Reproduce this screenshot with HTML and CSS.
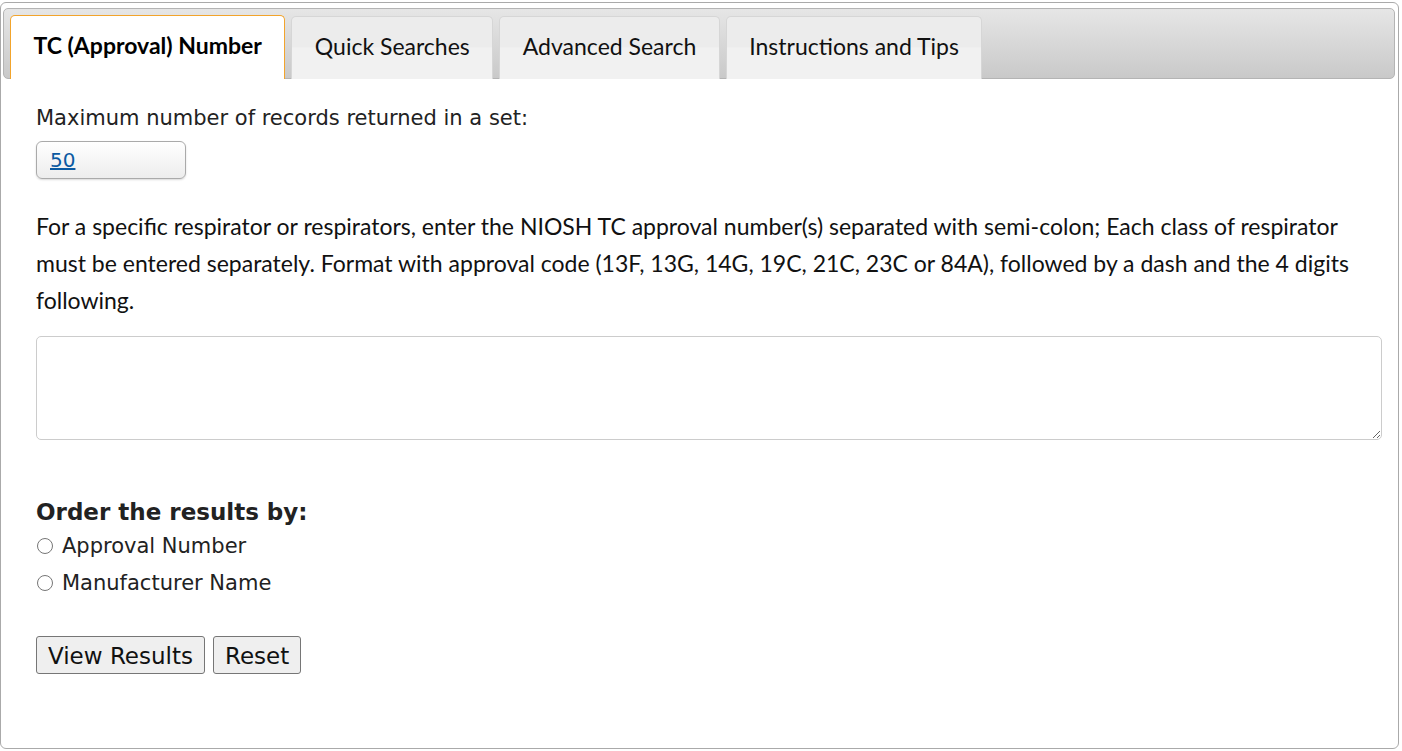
FILE: index.html
```html
<!DOCTYPE html>
<html lang="en">
<head>
<meta charset="utf-8">
<title>TC Approval Number Search</title>
<link rel="stylesheet" href="styles.css">
</head>
<body>
<div class="widget">
  <ul class="tabs">
    <li class="tab active">TC (Approval) Number</li>
    <li class="tab">Quick Searches</li>
    <li class="tab">Advanced Search</li>
    <li class="tab">Instructions and Tips</li>
  </ul>
  <div class="panel">
    <div class="max-label">Maximum number of records returned in a set:</div>
    <div class="select"><a class="select-text" href="#">50</a></div>
    <p class="desc">For a specific respirator or respirators, enter the NIOSH TC approval number(s) separated with semi-colon; Each class of respirator must be entered separately. Format with approval code (13F, 13G, 14G, 19C, 21C, 23C or 84A), followed by a dash and the 4 digits following.</p>
    <textarea class="tc-input"></textarea>
    <div class="order-title">Order the results by:</div>
    <label class="radio-row"><input type="radio" name="order" class="radio"> Approval Number</label>
    <label class="radio-row"><input type="radio" name="order" class="radio"> Manufacturer Name</label>
    <div class="buttons">
      <button class="btn">View Results</button>
      <button class="btn">Reset</button>
    </div>
  </div>
</div>
</body>
</html>
```

FILE: styles.css
```css
html, body {
  margin: 0;
  padding: 0;
  background: #fff;
}

.widget {
  box-sizing: border-box;
  width: 1399px;
  height: 747px;
  margin-top: 2px;
  border: 1px solid #aaaaaa;
  border-radius: 6px;
  padding: 5px 3px 0 2px;
}

.tabs {
  list-style: none;
  margin: 0;
  box-sizing: border-box;
  height: 71px;
  padding: 6px 6px 0 6px;
  border: 1px solid #b4b4b4;
  border-radius: 5px;
  background: linear-gradient(to bottom, #e6e6e6 0%, #c9c9c9 100%);
  display: flex;
  align-items: flex-end;
  gap: 6px;
}

.tab {
  box-sizing: border-box;
  height: 63px;
  margin-bottom: -1px;
  padding: 0 22.5px;
  border: 1px solid #d6d6d6;
  border-bottom: none;
  border-radius: 5px 5px 0 0;
  background: linear-gradient(to bottom, #ececec 0%, #ececec 48%, #f1f1f1 50%, #f1f1f1 100%);
  font-family: Lato, "Liberation Sans", sans-serif;
  font-size: 23px;
  line-height: 58px;
  color: #111;
  white-space: nowrap;
}

.tab.active {
  height: 64px;
  margin-bottom: -1px;
  background: #ffffff;
  border: 1px solid #f2a42c;
  border-bottom: none;
  font-weight: bold;
  color: #000;
}

.panel {
  padding: 0 33px;
}

.max-label {
  margin-top: 27px;
  font-family: "DejaVu Sans", Verdana, sans-serif;
  font-size: 21px;
  line-height: 24px;
  color: #222;
}

.select {
  box-sizing: border-box;
  width: 150px;
  height: 38px;
  margin-top: 11px;
  border: 1px solid #aaaaaa;
  border-radius: 6px;
  background: linear-gradient(to bottom, #ffffff 0%, #f6f6f6 50%, #ededed 100%);
  box-shadow: 0 1px 2px rgba(0, 0, 0, 0.15);
  padding-left: 13px;
  display: flex;
  align-items: center;
}

.select-text {
  font-family: "DejaVu Sans", Verdana, sans-serif;
  font-size: 20px;
  color: #0b5aa2;
  text-decoration: underline;
}

.desc {
  margin: 29px 0 0 0;
  font-family: Lato, "Liberation Sans", sans-serif;
  font-size: 23px;
  line-height: 37px;
  color: #111;
}

.tc-input {
  display: block;
  box-sizing: border-box;
  width: 1346px;
  height: 104px;
  margin-top: 17px;
  border: 1px solid #cccccc;
  border-radius: 5px;
  padding: 6px;
  font-family: "DejaVu Sans", sans-serif;
  font-size: 18px;
  resize: both;
}

.order-title {
  margin-top: 60px;
  margin-bottom: 3px;
  font-family: "DejaVu Sans", Verdana, sans-serif;
  font-size: 23px;
  font-weight: bold;
  line-height: 24px;
  color: #222;
}

.radio-row {
  display: flex;
  align-items: center;
  height: 37px;
  font-family: "DejaVu Sans", Verdana, sans-serif;
  font-size: 21px;
  color: #222;
}

.radio {
  width: 16px;
  height: 16px;
  margin: 0 9px 0 1px;
}

.buttons {
  margin-top: 35px;
  display: flex;
  gap: 8px;
}

.btn {
  box-sizing: border-box;
  height: 38px;
  padding: 2px 11px 0 11px;
  border: 1px solid #767676;
  border-radius: 3px;
  background: #efefef;
  font-family: "DejaVu Sans", Verdana, sans-serif;
  font-size: 23px;
  color: #111;
}
```
